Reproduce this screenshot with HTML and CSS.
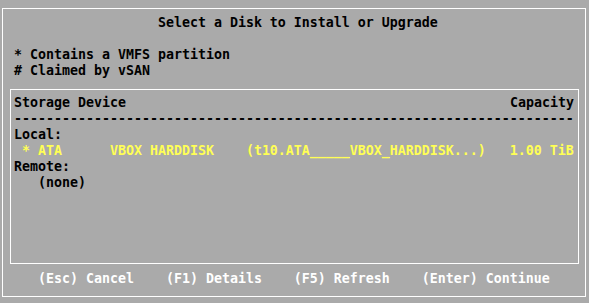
FILE: index.html
```html
<!DOCTYPE html>
<html lang="en">
<head>
  <meta charset="UTF-8">
  <title>Select a Disk to Install or Upgrade</title>
  <link rel="stylesheet" href="styles.css">
</head>
<body>
<div class="screen">

  <!-- outer dialog frame -->
  <div class="dialog">
    <div class="title line">                  Select a Disk to Install or Upgrade</div>

    <!-- legend -->
    <div class="legend">
      <div class="line">* Contains a VMFS partition</div>
      <div class="line"># Claimed by vSAN</div>
    </div>

    <!-- disk list box -->
    <div class="disk-box">
      <div class="disk-head">
        <span>Storage Device</span>
        <span>Capacity</span>
      </div>
      <div class="line">----------------------------------------------------------------------</div>
      <div class="line">Local:</div>
      <div class="line selected"> * ATA      VBOX HARDDISK    (t10.ATA_____VBOX_HARDDISK...)   1.00 TiB</div>
      <div class="line">Remote:</div>
      <div class="line">   (none)</div>
    </div>

    <!-- key hints -->
    <div class="keys line">   (Esc) Cancel    (F1) Details    (F5) Refresh    (Enter) Continue</div>
  </div>

</div>
</body>
</html>
```

FILE: styles.css
```css
:root{
  --console-gray: #aaaaaa;
  --console-white: #ffffff;
  --console-yellow: #ffff55;
  --console-black: #000000;
}

body{
  margin: 0;
  background-color: var(--console-gray);
  color: var(--console-black);
  font-family: 'DejaVu Sans Mono', 'Liberation Mono', monospace;
  font-weight: 700;
  font-size: 13.29px;
  line-height: 16px;
}

.screen{
  padding: 8px 0 0 2px;
}

/* outer frame */
.dialog{
  box-sizing: border-box;
  width: 584px;
  height: 289px;
  border: 1px solid var(--console-white);
  padding-left: 7px;
}

.title,
.legend,
.keys{
  margin-left: 4px;
}

.title{
  margin-top: 6px;
}

.legend{
  margin-top: 16px;
}

.line{
  white-space: pre;
}

/* list box */
.disk-box{
  box-sizing: border-box;
  width: 569px;
  height: 175px;
  margin-top: 10px;
  padding: 5px 3px 0 3px;
  border: 1px solid var(--console-white);
}

.disk-head{
  display: flex;
  justify-content: space-between;
  width: 560px;
}

.selected{
  color: var(--console-yellow);
}

.keys{
  margin-top: 7px;
  color: var(--console-white);
}
```
